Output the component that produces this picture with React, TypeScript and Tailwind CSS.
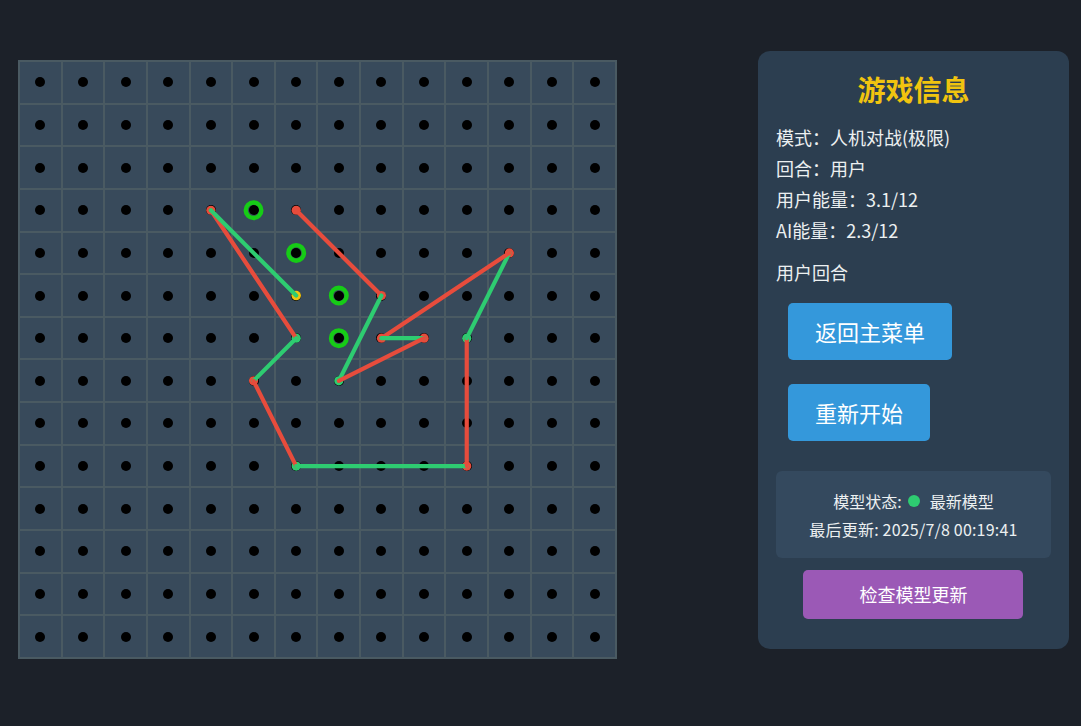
import React from "react";

const N = 14;
const SIZE = 597;
const P = SIZE / N;

const c = (i: number) => P * (i + 0.5);

type Seg = { a: [number, number]; b: [number, number]; color: string };

const RED = "#e74c3c";
const GREEN = "#2ecc71";

const segments: Seg[] = [
  { a: [4, 3], b: [6, 6], color: RED },
  { a: [4, 3], b: [6, 5], color: GREEN },
  { a: [6, 3], b: [8, 5], color: RED },
  { a: [8, 5], b: [7, 7], color: GREEN },
  { a: [6, 6], b: [5, 7], color: GREEN },
  { a: [5, 7], b: [6, 9], color: RED },
  { a: [6, 9], b: [10, 9], color: GREEN },
  { a: [10, 9], b: [10, 6], color: RED },
  { a: [10, 6], b: [11, 4], color: GREEN },
  { a: [11, 4], b: [8, 6], color: RED },
  { a: [8, 6], b: [9, 6], color: GREEN },
  { a: [9, 6], b: [7, 7], color: RED },
];

// end points sit under the lines, so only their rim shows
const endDots: { p: [number, number]; color: string }[] = [
  { p: [4, 3], color: RED },
  { p: [6, 3], color: RED },
  { p: [8, 5], color: RED },
  { p: [7, 7], color: GREEN },
  { p: [6, 6], color: GREEN },
  { p: [5, 7], color: RED },
  { p: [6, 9], color: GREEN },
  { p: [10, 9], color: RED },
  { p: [10, 6], color: GREEN },
  { p: [11, 4], color: RED },
  { p: [8, 6], color: RED },
  { p: [9, 6], color: RED },
];

const rings: [number, number][] = [
  [5, 3],
  [6, 4],
  [7, 5],
  [7, 6],
];

const Board: React.FC = () => {
  return (
    <div className="relative border border-[#4a5a62] bg-[#384a5b]">
      <div className="grid grid-cols-[repeat(14,42.643px)] grid-rows-[repeat(14,42.643px)]">
        {Array.from({ length: N * N }).map((_, i) => (
          <div
            key={i}
            className="flex items-center justify-center border border-[#4a5a62]"
          >
            <div className="h-[10px] w-[10px] rounded-full bg-black" />
          </div>
        ))}
      </div>
      <svg
        className="absolute inset-0"
        width={SIZE}
        height={SIZE}
        viewBox={`0 0 ${SIZE} ${SIZE}`}
      >
        {rings.map(([x, y], i) => (
          <circle
            key={i}
            cx={c(x)}
            cy={c(y)}
            r={7.8}
            fill="none"
            stroke="#16cc16"
            strokeWidth={4.4}
          />
        ))}
        {endDots.map((d, i) => (
          <circle key={i} cx={c(d.p[0])} cy={c(d.p[1])} r={4.6} fill={d.color} />
        ))}
        <circle cx={c(6)} cy={c(5)} r={4.8} fill="#f1c40f" />
        {segments.map((s, i) => (
          <line
            key={i}
            x1={c(s.a[0])}
            y1={c(s.a[1])}
            x2={c(s.b[0])}
            y2={c(s.b[1])}
            stroke={s.color}
            strokeWidth={4.2}
            strokeLinecap="round"
          />
        ))}
      </svg>
    </div>
  );
};

const App: React.FC = () => {
  return (
    <div
      className="flex h-[726px] w-[1081px] items-start bg-[#1c2129]"
      style={{ fontFamily: '"Noto Sans CJK SC", "Noto Sans", sans-serif' }}
    >
      <div className="ml-[18px] mt-[60px]">
        <Board />
      </div>

      <div className="ml-[141px] mt-[51px] flex h-[598px] w-[311px] flex-col rounded-[12px] bg-[#2c3e50] px-[18px] pt-[20px] text-[#ecf0f1]">
        <h2 className="text-center text-[28px] font-bold leading-[36px] text-[#f1c40f]">
          游戏信息
        </h2>
        <div className="mt-[15px] text-[18px] leading-[31px]">
          <p>模式：人机对战(极限)</p>
          <p>回合：用户</p>
          <p>用户能量：3.1/12</p>
          <p>AI能量：2.3/12</p>
        </div>
        <p className="mt-[11px] text-[18px] leading-[31px]">用户回合</p>

        <div className="ml-[12px] mt-[15px] flex flex-col items-start gap-[24px]">
          <button className="h-[57px] rounded-[5px] bg-[#3498db] px-[27px] text-[22px] text-white">
            返回主菜单
          </button>
          <button className="h-[57px] rounded-[5px] bg-[#3498db] px-[27px] text-[22px] text-white">
            重新开始
          </button>
        </div>

        <div className="mt-[30px] rounded-[6px] bg-[#34495e] pb-[15px] pt-[16px] text-center text-[16px] leading-[28px] text-[#ecf0f1]">
          <div className="flex items-center justify-center">
            <span>模型状态:</span>
            <span className="ml-[6px] mr-[10px] inline-block h-[12px] w-[12px] rounded-full bg-[#2ecc71]" />
            <span>最新模型</span>
          </div>
          <div className="tracking-[0.2px]">最后更新: 2025/7/8 00:19:41</div>
        </div>

        <button className="mx-auto mt-[12px] h-[49px] w-4/5 rounded-[5px] bg-[#9b59b6] text-[18px] text-white">
          检查模型更新
        </button>
      </div>
    </div>
  );
};

export default App;
